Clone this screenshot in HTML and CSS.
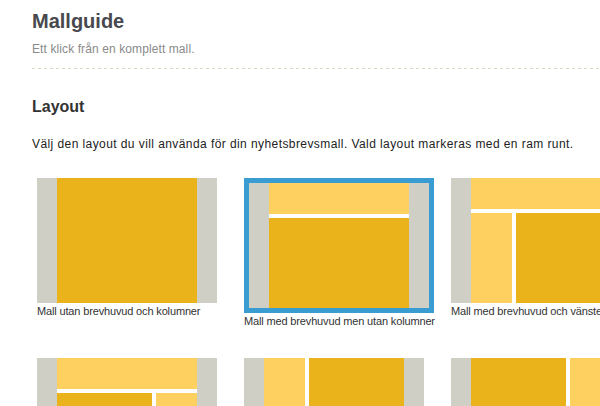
FILE: index.html
```html
<!DOCTYPE html>
<html lang="sv">
<head>
<meta charset="utf-8">
<title>Mallguide</title>
<link rel="stylesheet" href="styles.css">
</head>
<body>
<div class="page">
  <h1 class="title">Mallguide</h1>
  <p class="subtitle">Ett klick från en komplett mall.</p>
  <div class="divider"></div>
  <h2 class="section">Layout</h2>
  <p class="intro">Välj den layout du vill använda för din nyhetsbrevsmall. Vald layout markeras med en ram runt.</p>

  <div class="grid">
    <div class="item">
      <div class="thumb">
        <div class="side"></div>
        <div class="mid"><div class="body"><div class="main full"></div></div></div>
        <div class="side"></div>
      </div>
      <div class="caption">Mall utan brevhuvud och kolumner</div>
    </div>

    <div class="item">
      <div class="thumb selected">
        <div class="side"></div>
        <div class="mid"><div class="head"></div><div class="body"><div class="main full"></div></div></div>
        <div class="side"></div>
      </div>
      <div class="caption">Mall med brevhuvud men utan kolumner</div>
    </div>

    <div class="item">
      <div class="thumb">
        <div class="side"></div>
        <div class="mid"><div class="head"></div><div class="body"><div class="col"></div><div class="main"></div></div></div>
        <div class="side"></div>
      </div>
      <div class="caption">Mall med brevhuvud och vänsterkolumn</div>
    </div>

    <div class="item">
      <div class="thumb">
        <div class="side"></div>
        <div class="mid"><div class="head"></div><div class="body"><div class="main"></div><div class="col"></div></div></div>
        <div class="side"></div>
      </div>
      <div class="caption">Mall med brevhuvud och högerkolumn</div>
    </div>

    <div class="item">
      <div class="thumb">
        <div class="side"></div>
        <div class="mid"><div class="body"><div class="col"></div><div class="main"></div></div></div>
        <div class="side"></div>
      </div>
      <div class="caption">Mall utan brevhuvud med vänsterkolumn</div>
    </div>

    <div class="item">
      <div class="thumb">
        <div class="side"></div>
        <div class="mid"><div class="body"><div class="main"></div><div class="col"></div></div></div>
        <div class="side"></div>
      </div>
      <div class="caption">Mall utan brevhuvud med högerkolumn</div>
    </div>
  </div>
</div>
</body>
</html>
```

FILE: styles.css
```css
html, body {
  margin: 0;
  padding: 0;
  overflow: hidden;
  background: #ffffff;
}

body {
  font-family: "Liberation Sans", Arial, sans-serif;
  color: #222222;
}

.page {
  width: 640px;
  padding: 9px 0 0 32px;
}

.title {
  margin: 0;
  font-size: 20px;
  line-height: 24px;
  font-weight: bold;
  color: #48494e;
}

.subtitle {
  margin: 8px 0 0;
  font-size: 12px;
  line-height: 16px;
  color: #8a8a8a;
  letter-spacing: 0.1px;
}

.divider {
  margin-top: 11px;
  height: 1px;
  background: repeating-linear-gradient(to right, #ddd9c4 0 3px, transparent 3px 6px);
}

.section {
  margin: 28px 0 0;
  font-size: 16px;
  line-height: 20px;
  font-weight: bold;
  color: #333333;
}

.intro {
  margin: 19px 0 0;
  font-size: 12px;
  line-height: 16px;
  color: #222222;
  letter-spacing: 0.42px;
  white-space: nowrap;
}

.grid {
  margin: 26px 0 0 5px;
  display: grid;
  grid-template-columns: 190px 190px 190px;
  grid-auto-rows: 180px;
  column-gap: 17px;
}

.item {
  display: flex;
  flex-direction: column;
  align-items: flex-start;
}

.thumb {
  display: flex;
  width: 180px;
  height: 125px;
  background: #ffffff;
}

.thumb.selected {
  border: 5px solid #3a9dd1;
}

.side {
  width: 20px;
  background: #d0cfc6;
}

.mid {
  width: 140px;
  display: flex;
  flex-direction: column;
  gap: 4px;
}

.head {
  height: 31px;
  background: #fdd05f;
}

.body {
  flex: 1;
  display: flex;
  gap: 4px;
}

.main {
  width: 95px;
  background: #eab21b;
}

.main.full {
  width: 140px;
}

.col {
  width: 41px;
  background: #fdd05f;
}

.caption {
  padding-top: 2px;
  font-size: 11px;
  line-height: 13px;
  color: #333333;
  white-space: nowrap;
  letter-spacing: -0.15px;
}
```
